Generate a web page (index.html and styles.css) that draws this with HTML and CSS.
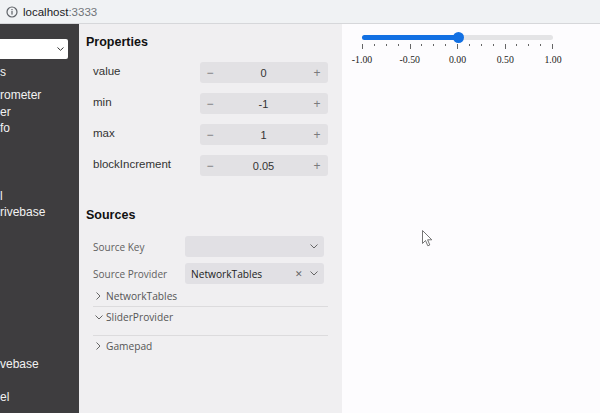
FILE: index.html
```html
<!DOCTYPE html>
<html>
<head>
<meta charset="utf-8">
<link rel="stylesheet" href="styles.css">
</head>
<body>
<div class="urlbar">
  <svg class="info" width="12" height="12" viewBox="0 0 12 12"><circle cx="6" cy="6" r="5" fill="none" stroke="#5f6368" stroke-width="1.2"/><rect x="5.4" y="5" width="1.2" height="3.6" fill="#5f6368"/><rect x="5.4" y="3" width="1.2" height="1.2" fill="#5f6368"/></svg>
  <span class="host">localhost</span><span class="port">:3333</span>
</div>
<div class="app">
  <aside class="sidebar">
    <div class="sel">
      <svg width="7" height="4" viewBox="0 0 7 4"><path d="M0.5 0.5 L3.5 3.3 L6.5 0.5" fill="none" stroke="#333" stroke-width="1"/></svg>
    </div>
    <ul class="tree">
      <li class="hdr">s</li>
      <li>rometer</li>
      <li>er</li>
      <li>fo</li>
      <li></li>
      <li></li>
      <li></li>
      <li>l</li>
      <li>rivebase</li>
      <li></li>
      <li></li>
      <li></li>
      <li></li>
      <li></li>
      <li></li>
      <li></li>
      <li></li>
      <li>vebase</li>
      <li></li>
      <li>el</li>
    </ul>
  </aside>
  <section class="props">
    <h2 class="title">Properties</h2>
    <div class="rows">
      <div class="row"><span class="lbl">value</span><div class="step"><span class="pm">−</span><span class="num">0</span><span class="pm">+</span></div></div>
      <div class="row"><span class="lbl">min</span><div class="step"><span class="pm">−</span><span class="num">-1</span><span class="pm">+</span></div></div>
      <div class="row"><span class="lbl">max</span><div class="step"><span class="pm">−</span><span class="num">1</span><span class="pm">+</span></div></div>
      <div class="row"><span class="lbl">blockIncrement</span><div class="step"><span class="pm">−</span><span class="num">0.05</span><span class="pm">+</span></div></div>
    </div>
    <h2 class="title sources-title">Sources</h2>
    <div class="src">
      <div class="srow"><span class="slbl">Source Key</span><div class="dd"><span class="ddv"></span><svg width="8" height="5" viewBox="0 0 8 5"><path d="M0.5 0.5 L4 4 L7.5 0.5" fill="none" stroke="#666" stroke-width="1"/></svg></div></div>
      <div class="srow"><span class="slbl">Source Provider</span><div class="dd"><span class="ddv">NetworkTables</span><span class="x">✕</span><svg width="8" height="5" viewBox="0 0 8 5"><path d="M0.5 0.5 L4 4 L7.5 0.5" fill="none" stroke="#666" stroke-width="1"/></svg></div></div>
    </div>
    <div class="acc">
      <div class="item"><div class="head"><svg width="5" height="8" viewBox="0 0 5 8"><path d="M0.5 0.5 L4 4 L0.5 7.5" fill="none" stroke="#666" stroke-width="1"/></svg><span>NetworkTables</span></div></div>
      <div class="item open"><div class="head"><svg width="8" height="5" viewBox="0 0 8 5"><path d="M0.5 0.5 L4 4 L7.5 0.5" fill="none" stroke="#666" stroke-width="1"/></svg><span>SliderProvider</span></div><div class="body"></div></div>
      <div class="item last"><div class="head"><svg width="5" height="8" viewBox="0 0 5 8"><path d="M0.5 0.5 L4 4 L0.5 7.5" fill="none" stroke="#666" stroke-width="1"/></svg><span>Gamepad</span></div></div>
    </div>
  </section>
  <main class="canvas">
    <div class="slider">
      <div class="track"><div class="fill" style="width:50%"></div><div class="thumb" style="left:50%"></div></div>
      <div class="ticks">
        <i class="maj"></i><i></i><i></i><i></i><i class="maj"></i><i></i><i></i><i></i><i class="maj"></i><i></i><i></i><i></i><i class="maj"></i><i></i><i></i><i></i><i class="maj"></i>
      </div>
      <div class="labels"><span>-1.00</span><span>-0.50</span><span>0.00</span><span>0.50</span><span>1.00</span></div>
    </div>
  </main>
</div>
<svg class="cursor" width="12" height="18" viewBox="0 0 12 18"><path d="M0.5 0.5 L0.5 13.5 L3.5 10.5 L5.8 15.8 L7.8 15 L5.6 9.8 L9.8 9.8 Z" fill="#fff" stroke="#666" stroke-width="0.9"/></svg>
</body>
</html>
```
FILE: styles.css
```css
* { box-sizing: border-box; }
html, body { margin: 0; padding: 0; }
body {
  width: 600px;
  height: 413px;
  overflow: hidden;
  position: relative;
  font-family: "Liberation Sans", Arial, sans-serif;
  background: #fdfcfe;
}
.urlbar {
  height: 24px;
  background: #f0f2f4;
  border-bottom: 1px solid #d6d7da;
  display: flex;
  align-items: center;
  padding-left: 6px;
  font-size: 11.5px;
}
.urlbar .info { margin-right: 5px; }
.host { color: #202124; }
.port { color: #6f7377; }

.app {
  display: flex;
  height: 389px;
}
.sidebar {
  width: 79px;
  flex: none;
  background: #3e3d3f;
  padding-top: 15px;
  overflow: hidden;
}
.sel {
  width: 68px;
  height: 20px;
  background: #fff;
  border-radius: 0 2px 2px 0;
  display: flex;
  align-items: center;
  justify-content: flex-end;
  padding-right: 4px;
}
.tree {
  list-style: none;
  margin: 5px 0 0 0;
  padding: 0;
  color: #f2f2f2;
  font-size: 12px;
}
.tree li {
  height: 16.8px;
  line-height: 16.8px;
  white-space: nowrap;
}
.tree li.hdr { margin-bottom: 6px; }

.props {
  width: 263px;
  flex: none;
  background: #f0eff1;
  padding: 10px 14px 0 7px;
}
.title {
  margin: 0;
  font-size: 12.5px;
  font-weight: bold;
  line-height: 16px;
  color: #111;
}
.rows {
  display: flex;
  flex-direction: column;
  gap: 10px;
  margin-top: 12px;
  padding-left: 7px;
}
.row {
  display: flex;
  align-items: center;
  justify-content: space-between;
  height: 21px;
}
.lbl {
  font-size: 11.5px;
  color: #333;
  margin-top: -3px;
}
.step {
  width: 128px;
  height: 21px;
  background: #e2e1e4;
  border-radius: 3px;
  display: flex;
  align-items: center;
  justify-content: space-between;
  padding: 0 6px 0 5px;
  font-size: 11px;
  color: #333;
}
.pm { color: #7a7a7d; font-size: 12px; width: 10px; text-align: center; }
.num { flex: 1; text-align: center; }

.sources-title { margin-top: 31px; }
.src {
  margin-top: 13px;
  padding-left: 7px;
  display: flex;
  flex-direction: column;
  gap: 6px;
  font-family: "Open Sans", sans-serif;
}
.srow { display: flex; align-items: center; height: 21px; }
.slbl { width: 92px; font-size: 10px; color: #606060; }
.dd {
  width: 139px;
  height: 21px;
  background: #e1e0e4;
  border-radius: 3px;
  display: flex;
  align-items: center;
  padding: 0 6px 0 6px;
  gap: 7px;
}
.ddv { flex: 1; font-size: 10.2px; color: #222; }
.x { font-size: 9px; color: #666; }

.acc {
  margin-top: 2px;
  padding-left: 7px;
  font-family: "Open Sans", sans-serif;
  font-size: 10.2px;
  color: #555;
}
.item { border-bottom: 1px solid #dcdbdd; }
.item.last { border-bottom: none; }
.head {
  height: 20px;
  display: flex;
  align-items: center;
  gap: 5px;
  padding-left: 3px;
}
.item.open .head { gap: 3px; padding-left: 2px; }
.body { height: 8px; }

.canvas {
  flex: 1;
  background: #fdfcfe;
  padding: 11px 0 0 20px;
}
.slider { width: 191px; }
.track {
  position: relative;
  height: 5px;
  border-radius: 3px;
  background: #e4e4e6;
}
.fill {
  height: 5px;
  border-radius: 3px 0 0 3px;
  background: #1270e3;
}
.thumb {
  position: absolute;
  top: -3px;
  width: 11px;
  height: 11px;
  margin-left: -5px;
  border-radius: 50%;
  background: #1270e3;
}
.ticks {
  display: flex;
  justify-content: space-between;
  margin-top: 4px;
  height: 6px;
}
.ticks i {
  display: block;
  width: 1px;
  height: 2px;
  background: #666;
}
.ticks i.maj { height: 5px; }
.labels {
  display: flex;
  justify-content: space-between;
  width: 221px;
  margin-left: -15px;
  margin-top: 4px;
  font-family: "Liberation Serif", serif;
  font-size: 9.8px;
  color: #222;
}
.labels span { width: 30px; text-align: center; }

.cursor {
  position: absolute;
  left: 422px;
  top: 230px;
}
```
